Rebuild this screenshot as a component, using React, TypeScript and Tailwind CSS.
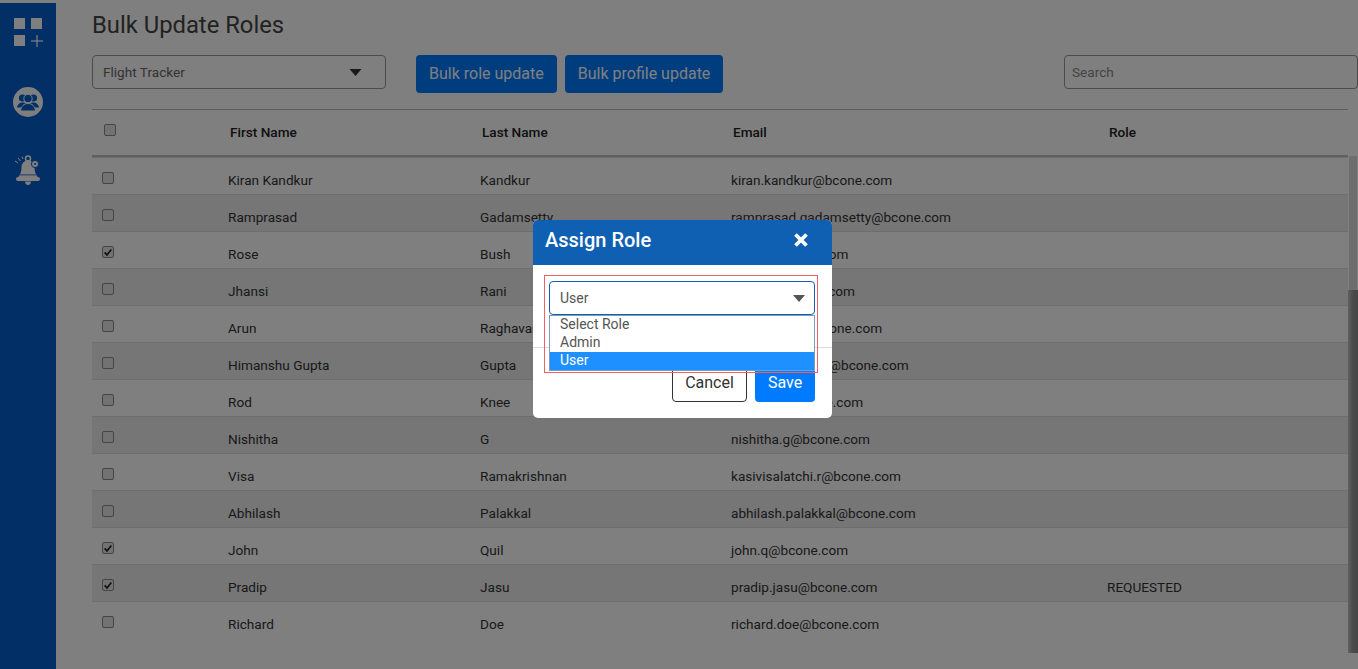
const rows = [
  { first: 'Kiran Kandkur', last: 'Kandkur', email: 'kiran.kandkur@bcone.com', checked: false, role: '' },
  { first: 'Ramprasad', last: 'Gadamsetty', email: 'ramprasad.gadamsetty@bcone.com', checked: false, role: '' },
  { first: 'Rose', last: 'Bush', email: 'rose.b@bcone.com', checked: true, role: '' },
  { first: 'Jhansi', last: 'Rani', email: 'jhansi.r@bcone.com', checked: false, role: '' },
  { first: 'Arun', last: 'Raghavan', email: 'arun.raghav@bcone.com', checked: false, role: '' },
  { first: 'Himanshu Gupta', last: 'Gupta', email: 'himanshu.gupta@bcone.com', checked: false, role: '' },
  { first: 'Rod', last: 'Knee', email: 'rod.knee@bcone.com', checked: false, role: '' },
  { first: 'Nishitha', last: 'G', email: 'nishitha.g@bcone.com', checked: false, role: '' },
  { first: 'Visa', last: 'Ramakrishnan', email: 'kasivisalatchi.r@bcone.com', checked: false, role: '' },
  { first: 'Abhilash', last: 'Palakkal', email: 'abhilash.palakkal@bcone.com', checked: false, role: '' },
  { first: 'John', last: 'Quil', email: 'john.q@bcone.com', checked: true, role: '' },
  { first: 'Pradip', last: 'Jasu', email: 'pradip.jasu@bcone.com', checked: true, role: 'REQUESTED' },
  { first: 'Richard', last: 'Doe', email: 'richard.doe@bcone.com', checked: false, role: '' },
];

function Caret({ className }: { className: string }) {
  return (
    <svg viewBox="0 0 12 7" className={className}>
      <path d="M0 0h12L6 7z" fill="currentColor" />
    </svg>
  );
}

function Check({ checked }: { checked?: boolean }) {
  return (
    <span className="flex h-3 w-3 items-center justify-center rounded-[2px] border border-[#8a8a8a] bg-[#e4e4e4]">
      {checked && (
        <svg viewBox="0 0 12 12" className="h-[10px] w-[10px]">
          <path d="M2 6.500l2.800 3L10 3" fill="none" stroke="#222" strokeWidth="2" />
        </svg>
      )}
    </span>
  );
}

export default function App() {
  return (
    <div className="relative flex h-[669px] w-[1358px] overflow-hidden bg-white pt-[3px] font-['Roboto',sans-serif] text-[13.6px] text-[#333]">
      <aside className="flex w-14 shrink-0 flex-col items-center bg-[#0560cc] pt-[15px] text-white">
        <svg viewBox="-1 0 30 30" className="h-[30px] w-[30px]" fill="#fff">
          <rect x="0" y="0" width="11" height="11" />
          <rect x="17" y="0" width="11" height="11" />
          <rect x="0" y="17" width="11" height="11" />
          <rect x="17" y="22.400" width="12" height="1.200" />
          <rect x="22.400" y="17" width="1.200" height="12" />
        </svg>
        <svg viewBox="0 0 30 30" className="mt-[39px] h-[30px] w-[30px]">
          <circle cx="15" cy="15" r="15" fill="#fff" />
          <g fill="#0560cc">
            <circle cx="9.500" cy="11" r="3.600" />
            <circle cx="20.500" cy="11" r="3.600" />
            <path d="M4 20.500c.5-3.500 3-5 5.500-5s5 1.500 5.500 5zM15 20.500c.5-3.500 3-5 5.500-5s5 1.500 5.500 5z" />
            <circle cx="15" cy="11.500" r="4.200" stroke="#fff" />
            <path d="M7.500 24c.5-5 3.500-7.500 7.500-7.500s7 2.500 7.500 7.500z" stroke="#fff" />
          </g>
        </svg>
        <svg viewBox="0 0 26 34" className="mt-[37px] h-[34px] w-[26px]" fill="#fff">
          <circle cx="13" cy="4.500" r="2.500" fill="none" stroke="#fff" strokeWidth="1.500" />
          <path d="M13 6.500c-4 0-6.500 3-6.500 7 0 4-1.500 7.500-3 9.500h19c-1.500-2-3-5.500-3-9.500 0-4-2.500-7-6.500-7z" />
          <rect x="5" y="20.500" width="16" height="0.800" fill="#0560cc" />
          <rect x="1" y="23" width="24" height="4" rx="2" />
          <path d="M10 27.500h6c0 2-1.300 3.500-3 3.500s-3-1.500-3-3.500z" />
          <circle cx="20" cy="10" r="3.600" stroke="#0560cc" />
          <circle cx="20" cy="10" r="1" fill="#0560cc" />
          <path d="M0 7l3 2M3 4l2.500 3M7 2.500l1 2.500" stroke="#fff" strokeWidth="1" fill="none" />
        </svg>
      </aside>

      <main className="min-w-0 flex-1">
        <h1 className="mt-[6px] ml-[36px] text-[23.800px] leading-[32px] text-[#444]">Bulk Update Roles</h1>
        <div className="mt-[14px] flex h-[38px] items-start pl-[36px]">
          <div className="flex h-[34px] w-[294px] items-center justify-between rounded-[4px] border border-[#999] pr-[23px] pl-[10px] text-[#666]">
            Flight Tracker
            <Caret className="h-[7px] w-[13px] text-[#333]" />
          </div>
          <button className="ml-[30px] h-[38px] rounded-[4px] bg-[#007bff] px-[13px] text-[16px] text-white">Bulk role update</button>
          <button className="ml-[8px] h-[38px] rounded-[4px] bg-[#007bff] px-[13px] text-[16px] text-white">Bulk profile update</button>
          <div className="ml-auto flex h-[34px] w-[294px] items-center rounded-[4px] border border-[#999] px-[7px] text-[#888]">Search</div>
        </div>

        <div className="mt-[16px] mr-[10px] ml-[36px] flex h-[48px] items-start border-t border-[#bbb] border-b-2 border-b-[#c0c0c0] font-medium text-[#222]">
          <div className="w-[138px] pt-[14px] pl-[12px]"><Check /></div>
          <div className="w-[252px] pt-[12px]">First Name</div>
          <div className="w-[251px] pt-[12px]">Last Name</div>
          <div className="w-[376px] pt-[12px]">Email</div>
          <div className="pt-[12px]">Role</div>
        </div>

        <div className="mr-[10px] ml-[36px] border-t border-[#dcdcdc]">
          {rows.map((r, i) => (
            <div
              key={r.email}
              className={`flex h-[37px] items-start border-b ${i % 2 ? 'bg-[#ececec]' : 'bg-white'} ${i === rows.length - 1 ? 'border-transparent' : 'border-[#dcdcdc]'}`}
            >
              <div className="w-[136px] pt-[14px] pl-[10px]"><Check checked={r.checked} /></div>
              <div className="w-[252px] pt-[12px]">{r.first}</div>
              <div className="w-[251px] pt-[12px]">{r.last}</div>
              <div className="w-[376px] pt-[12px]">{r.email}</div>
              <div className="pt-[12px]">{r.role}</div>
            </div>
          ))}
        </div>
      </main>

      {/* scrollbar */}
      <div className="absolute top-[156px] right-0 h-[497px] w-[10px]">
        <div className="mx-px h-[134px] bg-[#dcdcdc]" />
        <div className="h-[363px] bg-gradient-to-r from-[#c0c0c0] via-[#969696] to-[#8c8c8c]" />
      </div>

      <div className="absolute inset-0 bg-black/50" />

      {/* modal */}
      <div className="absolute top-[220px] left-[533px] w-[299px] overflow-hidden rounded-[5px] bg-white">
        <div className="flex h-[45px] items-center justify-between bg-[#0f5fb3] pr-[23px] pb-[5px] pl-[12px] text-white">
          <span className="text-[20px] font-medium">Assign Role</span>
          <svg viewBox="0 0 16 16" className="h-[16px] w-[16px]">
            <path d="M2.500 2.500l11 11M13.500 2.500l-11 11" stroke="#fff" strokeWidth="3.800" />
          </svg>
        </div>
        <div className="h-[82px]" />
        <div className="flex h-[71px] items-start justify-end gap-2 border-t border-[#ddd] pt-[16px] pr-[17px]">
          <button className="h-[38px] w-[75px] rounded-[4px] border border-[#333] text-[16px] text-[#333]">Cancel</button>
          <button className="h-[38px] w-[60px] rounded-[4px] bg-[#007bff] text-[16px] text-white">Save</button>
        </div>
      </div>

      {/* highlighted select with open list */}
      <div className="absolute top-[275px] left-[544px] h-[98px] w-[274px] border border-[#f2606a] text-[14px]">
        <div className="mt-[5px] ml-[4px] flex h-[34px] w-[266px] items-center justify-between rounded-[4px] border border-[#0f5fb3] bg-white pr-[9px] pl-[10px] text-[#555]">
          User
          <Caret className="h-[7px] w-[12px] text-[#555]" />
        </div>
        <div className="ml-[4px] w-[266px] border border-[#7f9db9] bg-white text-[#555]">
          <div className="h-[18px] pl-[10px] leading-[16px]">Select Role</div>
          <div className="h-[18px] pl-[10px] leading-[16px]">Admin</div>
          <div className="h-[18px] bg-[#1e90ff] pl-[10px] leading-[16px] text-white">User</div>
        </div>
      </div>
    </div>
  );
}
